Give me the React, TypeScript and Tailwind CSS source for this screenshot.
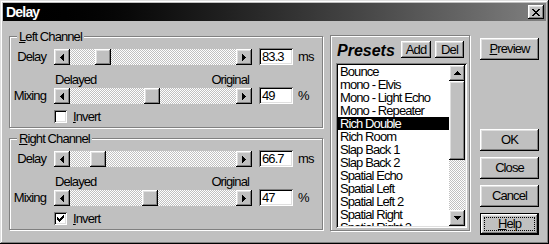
import React from "react";

// win98-ish bevels
const raised =
  "bg-[#c0c0c0] shadow-[inset_-1px_-1px_0_#000,inset_1px_1px_0_#fff,inset_-2px_-2px_0_#808080,inset_2px_2px_0_#dfdfdf]";
const sunken =
  "shadow-[inset_1px_1px_0_#808080,inset_-1px_-1px_0_#fff,inset_2px_2px_0_#000,inset_-2px_-2px_0_#dfdfdf]";
const etched = "border border-[#808080] shadow-[inset_1px_1px_0_#fff,1px_1px_0_#fff]";
const dither = "bg-[repeating-conic-gradient(#c0c0c0_0_25%,#fff_0_50%)] bg-[length:2px_2px]";

const arrows: Record<string, number[][]> = {
  left: [[3, 0, 1, 7], [2, 1, 1, 5], [1, 2, 1, 3], [0, 3, 1, 1]],
  right: [[0, 0, 1, 7], [1, 1, 1, 5], [2, 2, 1, 3], [3, 3, 1, 1]],
  up: [[3, 0, 1, 1], [2, 1, 3, 1], [1, 2, 5, 1], [0, 3, 7, 1]],
  down: [[0, 0, 7, 1], [1, 1, 5, 1], [2, 2, 3, 1], [3, 3, 1, 1]],
};

function Pixels({ rects, w, h }: { rects: number[][]; w: number; h: number }) {
  return (
    <svg width={w} height={h} viewBox={`0 0 ${w} ${h}`} shapeRendering="crispEdges">
      {rects.map(([x, y, rw, rh], i) => (
        <rect key={i} x={x} y={y} width={rw} height={rh} fill="#000" />
      ))}
    </svg>
  );
}

function ArrowBtn({ dir }: { dir: "left" | "right" | "up" | "down" }) {
  const horiz = dir === "left" || dir === "right";
  return (
    <div className={`flex h-[16px] w-[16px] shrink-0 items-center justify-center ${raised}`}>
      <Pixels rects={arrows[dir]} w={horiz ? 4 : 7} h={horiz ? 7 : 4} />
    </div>
  );
}

function Slider({ pos }: { pos: number }) {
  return (
    <div className="mt-[1px] flex h-[16px] w-[198px]">
      <ArrowBtn dir="left" />
      <div className={`flex-1 ${dither}`}>
        <div className={`h-[16px] w-[16px] ${raised}`} style={{ marginLeft: pos }} />
      </div>
      <ArrowBtn dir="right" />
    </div>
  );
}

function SliderRow({ label, pos, value, unit }: { label: string; pos: number; value: string; unit: string }) {
  return (
    <div className="flex items-start">
      <span className="w-[36px] text-right leading-[17px]">{label}</span>
      <div className="ml-[8px]">
        <Slider pos={pos} />
      </div>
      <div className={`ml-[7px] h-[17px] w-[34px] bg-white pl-[3px] leading-[17px] ${sunken}`}>{value}</div>
      <span className="ml-[5px] leading-[17px]">{unit}</span>
    </div>
  );
}

const checkPx = [
  [6, 0, 1, 1], [5, 1, 2, 1], [0, 2, 1, 1], [4, 2, 3, 1], [0, 3, 2, 1], [3, 3, 3, 1],
  [0, 4, 5, 1], [1, 5, 3, 1], [2, 6, 1, 1],
];

function Channel({ title, delayPos, delay, mixPos, mix, invert }: {
  title: string; delayPos: number; delay: string; mixPos: number; mix: string; invert: boolean;
}) {
  return (
    <div className={`relative h-[92px] w-[314px] pt-[11px] ${etched}`}>
      <span className="absolute left-[7px] top-[-7px] bg-[#c0c0c0] px-[2px] leading-[14px]">
        <span className="underline">{title[0]}</span>
        {title.slice(1)}
      </span>
      <SliderRow label="Delay" pos={delayPos} value={delay} unit="ms" />
      <div className="mt-[8px] flex h-[13px] w-[239px] justify-between pl-[45px] leading-[13px]">
        <span>Delayed</span>
        <span>Original</span>
      </div>
      <div className="mt-[1px]">
        <SliderRow label="Mixing" pos={mixPos} value={mix} unit="%" />
      </div>
      <div className="mt-[6px] flex items-center pl-[44px]">
        <div className={`flex h-[13px] w-[13px] items-center justify-center bg-white ${sunken}`}>
          {invert && <Pixels rects={checkPx} w={7} h={7} />}
        </div>
        <span className="ml-[6px] leading-[13px]">
          <span className="underline">I</span>nvert
        </span>
      </div>
    </div>
  );
}

const presets = [
  "Bounce",
  "mono - Elvis",
  "Mono - Light Echo",
  "Mono - Repeater",
  "Rich Double",
  "Rich Room",
  "Slap Back 1",
  "Slap Back 2",
  "Spatial Echo",
  "Spatial Left",
  "Spatial Left 2",
  "Spatial Right",
  "Spatial Right 2",
];

function Button({ children, className = "" }: { children: React.ReactNode; className?: string }) {
  return (
    <div className={`flex items-center justify-center ${raised} ${className}`}>{children}</div>
  );
}

export default function App() {
  return (
    <div
      className={`flex h-[244px] w-[549px] flex-col bg-[#c0c0c0] p-[3px] text-[13px] tracking-[-0.9px] text-black font-['Liberation_Sans',Arial,sans-serif] shadow-[inset_-1px_-1px_0_#000,inset_1px_1px_0_#dfdfdf,inset_-2px_-2px_0_#808080,inset_2px_2px_0_#fff]`}
    >
      <div className="flex h-[18px] items-center justify-between bg-linear-to-r from-black to-[#808080] pl-[3px] pr-[2px]">
        <span className="text-[14px] font-bold leading-[18px] tracking-[-0.8px] text-white">Delay</span>
        <div className={`flex h-[14px] w-[16px] items-center justify-center ${raised}`}>
          <Pixels
            w={8}
            h={7}
            rects={[
              [0, 0, 2, 1], [6, 0, 2, 1], [1, 1, 2, 1], [5, 1, 2, 1], [2, 2, 4, 1], [3, 3, 2, 1],
              [2, 4, 4, 1], [1, 5, 2, 1], [5, 5, 2, 1], [0, 6, 2, 1], [6, 6, 2, 1],
            ]}
          />
        </div>
      </div>

      <div className="flex items-start pl-[6px]">
        <div className="mt-[15px] flex flex-col gap-[10px]">
          <Channel title="Left Channel" delayPos={25} delay="83.3" mixPos={74} mix="49" invert={false} />
          <Channel title="Right Channel" delayPos={20} delay="66.7" mixPos={72} mix="47" invert={true} />
        </div>

        <div className={`ml-[7px] mt-[14px] h-[196px] w-[140px] ${etched}`}>
          <div className="mt-[5px] flex h-[17px] items-start pl-[6px]">
            <span className="mt-[1px] w-[64px] text-[16px] font-bold italic leading-[17px] tracking-normal">
              Presets
            </span>
            <Button className="h-[17px] w-[30px] leading-[17px]">Add</Button>
            <Button className="ml-[4px] h-[17px] w-[29px] leading-[17px]">Del</Button>
          </div>
          <div className={`ml-[5px] mt-[5px] flex h-[165px] w-[131px] bg-white p-[2px] ${sunken}`}>
            <div className="flex-1 overflow-hidden">
              {presets.map((p) => (
                <div
                  key={p}
                  className={`h-[13px] whitespace-nowrap pl-[2px] leading-[13px] ${
                    p === "Rich Double" ? "bg-black text-white" : ""
                  }`}
                >
                  {p}
                </div>
              ))}
            </div>
            <div className="flex w-[16px] flex-col">
              <ArrowBtn dir="up" />
              <div className={`h-[79px] ${raised}`} />
              <div className={`flex-1 ${dither}`} />
              <ArrowBtn dir="down" />
            </div>
          </div>
        </div>

        <div className="ml-[10px] mt-[17px] flex w-[59px] flex-col">
          <Button className="h-[22px]">
            <span className="underline">P</span>review
          </Button>
          <Button className="mt-[69px] h-[22px]">OK</Button>
          <Button className="mt-[6px] h-[22px]">Close</Button>
          <Button className="mt-[6px] h-[22px]">Cancel</Button>
          <div className="mt-[6px] h-[22px] border border-black">
            <div className={`flex h-full p-[3px] ${raised}`}>
              <div className="flex flex-1 items-center justify-center border border-dotted border-black">
                <span className="underline">H</span>elp
              </div>
            </div>
          </div>
        </div>
      </div>
    </div>
  );
}
